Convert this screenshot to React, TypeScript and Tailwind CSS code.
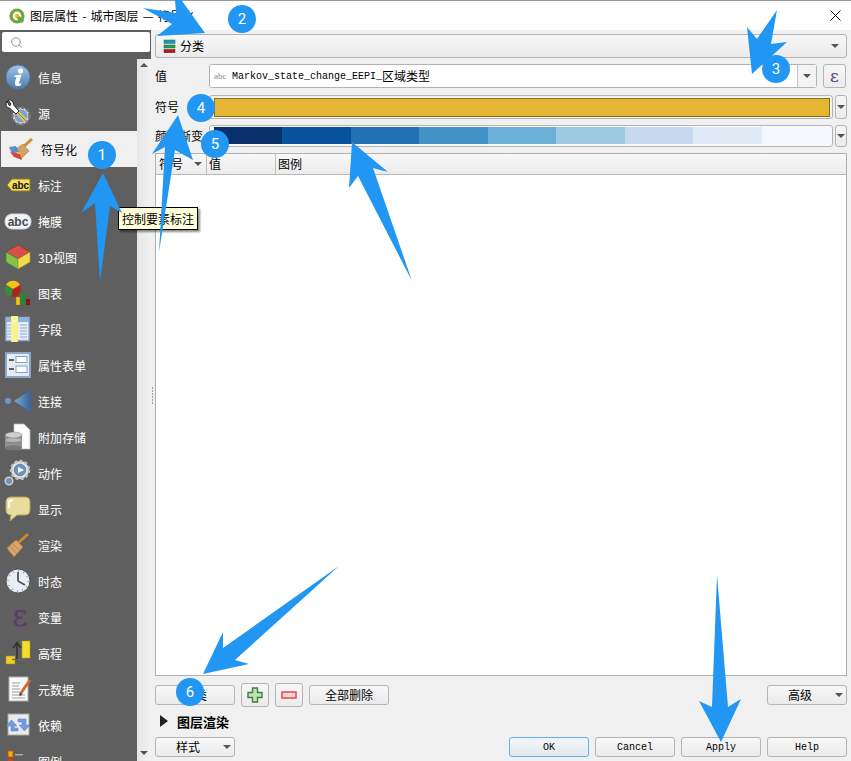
import React from "react";
import { Search } from "lucide-react";

const Caret = () => (
  <svg width="8" height="4" viewBox="0 0 8 4" className="shrink-0">
    <polygon points="0,0 8,0 4,4" fill="#555" />
  </svg>
);

const btn =
  "flex items-center justify-center rounded-[3px] border border-[#b4b4b4] bg-linear-to-b from-[#f7f7f7] to-[#ebebeb]";
const mono = "font-['Liberation_Mono','Noto_Sans_CJK_SC',monospace] text-[10px]";

const I = ({ children }: { children: React.ReactNode }) => (
  <svg width="26" height="26" viewBox="0 0 26 26" className="shrink-0 overflow-visible">
    {children}
  </svg>
);

const icons: Record<string, React.ReactNode> = {
  info: (
    <I>
      <defs>
        <linearGradient id="ig" x1="0" y1="0" x2="0" y2="1">
          <stop offset="0" stopColor="#a6c3e3" />
          <stop offset="1" stopColor="#4a7cb6" />
        </linearGradient>
      </defs>
      <circle cx="13" cy="13" r="12" fill="url(#ig)" stroke="#4d79ab" />
      <circle cx="15.5" cy="7" r="2.6" fill="#fff" />
      <path d="M9.5 11.5 L16.5 10.5 L14 19 Q14 20.5 16.5 19 L15.5 21.5 Q9 23.5 10 18 L11.5 13 L9.5 13 Z" fill="#fff" />
    </I>
  ),
  source: (
    <I>
      <circle cx="16" cy="16" r="8.5" fill="#d0d0d0" stroke="#777" strokeWidth="2.5" strokeDasharray="3 2" />
      <circle cx="16" cy="16" r="6.5" fill="#7fa2cc" />
      <line x1="11" y1="11" x2="21" y2="21" stroke="#d8c46c" strokeWidth="4" />
      <line x1="11" y1="11" x2="21" y2="21" stroke="#5f5530" strokeWidth="0.6" />
      <path d="M2 1 Q-1 7 5 8.5 L11 14 L14 11 L9 5.5 Q8 -1 3 0 L6 4 L4.5 6 Z" fill="#fff" stroke="#222" strokeWidth="1" />
    </I>
  ),
  symbology: (
    <I>
      <line x1="24" y1="3" x2="14" y2="12" stroke="#c9902f" strokeWidth="3" />
      <polygon points="8,13 15,8 21,15 13,23" fill="#d4a06a" stroke="#a97a40" strokeWidth="0.5" />
      <polygon points="1,11 8,10 11,16 4,18" fill="#5b8fd0" />
      <polygon points="1,11 4,18 11,16 13,19 3,17" fill="#f2d64a" />
      <polygon points="2,16 12,18 14,24 6,21" fill="#d8443c" />
    </I>
  ),
  labels: (
    <I>
      <polygon points="2,13 7,7 25,7 25,19 7,19" fill="#f6de5c" stroke="#8d7c22" />
      <text x="15.5" y="16.5" textAnchor="middle" fontSize="10" fontWeight="700" fontFamily="'Liberation Sans',sans-serif" fill="#111">abc</text>
    </I>
  ),
  mask: (
    <I>
      <rect x="0" y="6" width="26" height="15" rx="7" fill="#f2f4f8" stroke="#cfd6e4" />
      <text x="13" y="17.5" textAnchor="middle" fontSize="12" fontWeight="700" fontFamily="'Liberation Sans',sans-serif" fill="#4a4a4a">abc</text>
    </I>
  ),
  d3: (
    <I>
      <polygon points="13,1 25,8 13,15 1,8" fill="#d8504a" stroke="#8d2c28" strokeWidth="0.6" />
      <polygon points="1,8 13,15 13,25 1,18" fill="#7fc444" stroke="#4f8a25" strokeWidth="0.6" />
      <polygon points="13,15 25,8 25,18 13,25" fill="#f4d84e" stroke="#a8922a" strokeWidth="0.6" />
    </I>
  ),
  diagram: (
    <I>
      <circle cx="8" cy="9" r="8" fill="#b3221f" />
      <path d="M8 9 L1 5 A8 8 0 0 1 15 5 Z" fill="#f3c318" />
      <path d="M8 9 L1 5 A8 8 0 0 0 6 17 Z" fill="#2f8f3a" />
      <rect x="11" y="17" width="4" height="8" fill="#f3c318" stroke="#8c6b10" strokeWidth="0.4" />
      <rect x="16" y="12" width="4" height="13" fill="#1c8a3c" />
      <rect x="21" y="19" width="4" height="6" fill="#8a1410" />
    </I>
  ),
  fields: (
    <I>
      <rect x="1" y="1.5" width="23" height="23" fill="#e6edf7" stroke="#8caed6" strokeWidth="1.5" />
      <rect x="1" y="2" width="23" height="4" fill="#8fb1d9" />
      <path d="M15 9h7M15 12h7M15 15h7M15 18h7M15 21h7M2 9h4M2 12h4M2 15h4M2 18h4M2 21h4" stroke="#8fa9cc" />
      <rect x="6" y="0" width="7" height="26" fill="#f8f28f" />
      <rect x="8.5" y="4" width="2" height="2" fill="#fff" />
    </I>
  ),
  form: (
    <I>
      <rect x="1" y="1" width="24" height="24" fill="#e8eaee" stroke="#8aa6c8" strokeWidth="2" />
      <rect x="4" y="7" width="5" height="2" fill="#55606e" />
      <rect x="4" y="16" width="5" height="2" fill="#55606e" />
      <rect x="11" y="4.5" width="11" height="6" fill="#fff" stroke="#7ea0ca" />
      <rect x="11" y="14" width="11" height="6.5" fill="#fff" stroke="#7ea0ca" />
    </I>
  ),
  joins: (
    <I>
      <defs>
        <linearGradient id="jg" x1="0" y1="0" x2="1" y2="0">
          <stop offset="0" stopColor="#7fa6d2" />
          <stop offset="1" stopColor="#33649e" />
        </linearGradient>
      </defs>
      <polygon points="26,2 26,24 9,13" fill="url(#jg)" />
      <circle cx="3" cy="13" r="3" fill="#6f96c4" />
    </I>
  ),
  aux: (
    <I>
      <polygon points="9,0 19,0 25,6 25,25 9,25" fill="#fbfbfb" stroke="#bbb" strokeWidth="0.7" />
      <rect x="0" y="11" width="17" height="13" fill="#8f8f8f" />
      <ellipse cx="8.5" cy="24" rx="8.5" ry="2.5" fill="#777" />
      <ellipse cx="8.5" cy="16" rx="8.5" ry="2.5" fill="#b5b5b5" stroke="#666" strokeWidth="0.4" />
      <ellipse cx="8.5" cy="11" rx="8.5" ry="3" fill="#cfcfcf" stroke="#666" strokeWidth="0.4" />
    </I>
  ),
  actions: (
    <I>
      <circle cx="15" cy="10" r="9" fill="#e2e2e2" stroke="#bdbdbd" strokeWidth="2.5" strokeDasharray="3 2.2" />
      <circle cx="15" cy="10" r="5.8" fill="#6b94c6" stroke="#44648c" strokeWidth="0.6" />
      <polygon points="13,7 19,10 13,13" fill="#fff" />
      <circle cx="4" cy="21" r="3.8" fill="#6f94c4" stroke="#ccc" strokeWidth="1.5" />
    </I>
  ),
  display: (
    <I>
      <path d="M6 1 H20 Q25 1 25 6 V14 Q25 19 20 19 H12 L5 25 L6 19 Q1 19 1 14 V6 Q1 1 6 1 Z" fill="#e8dd9c" stroke="#b3a55c" />
      <path d="M4 12 V7 Q4 4 8 4" stroke="#fff" strokeWidth="2" fill="none" />
    </I>
  ),
  render: (
    <I>
      <line x1="23" y1="2" x2="12" y2="12" stroke="#c98a2e" strokeWidth="3" />
      <polygon points="2,16 11,8 18,15 9,25" fill="#d8a570" stroke="#a87a40" strokeWidth="0.6" />
      <path d="M5 14 L12 22 M8 12 L15 19 M3 18 L9 24" stroke="#b5834c" strokeWidth="0.8" />
    </I>
  ),
  temporal: (
    <I>
      <circle cx="13" cy="13" r="12" fill="#e9eef4" stroke="#555" />
      <circle cx="13" cy="13" r="10" fill="none" stroke="#7c9cc4" strokeWidth="1.4" strokeDasharray="1.2 4" />
      <path d="M13 13 V4 M13 13 L20 17" stroke="#555" strokeWidth="1.8" fill="none" />
    </I>
  ),
  variables: (
    <I>
      <text x="15" y="22" textAnchor="middle" fontSize="30" fontFamily="'DejaVu Serif',serif" fill="#5d3a6e">ε</text>
    </I>
  ),
  elevation: (
    <I>
      <rect x="17" y="1" width="8" height="17" fill="#f6de2e" stroke="#a89818" strokeWidth="0.6" />
      <rect x="1" y="16" width="9" height="8" fill="#f0cf2a" stroke="#a08a18" strokeWidth="0.6" />
      <path d="M7 19.5 H20" stroke="#666" strokeWidth="1.4" />
      <path d="M12 19 V4 M8 8 L12 2.5 L16 8" stroke="#333" strokeWidth="1.6" fill="none" />
    </I>
  ),
  metadata: (
    <I>
      <rect x="4" y="1" width="19" height="24" fill="#fafafa" stroke="#b0b0b0" />
      <path d="M7 7h8M7 10h7M7 13h8M7 16h7M7 19h13M7 22h13" stroke="#9c9c9c" />
      <line x1="25" y1="4" x2="16" y2="17" stroke="#e0662c" strokeWidth="3" />
      <polygon points="14.5,16 17.5,18 14.5,20.5" fill="#444" />
    </I>
  ),
  depend: (
    <I>
      <rect x="3" y="2" width="21" height="21" fill="#ebebeb" stroke="#a8a8a8" />
      <path d="M13 7 H21 V13 H25 L19.5 19 L14 13 H17 V10 H13 Z" fill="#6f9fe0" stroke="#4d7cc0" strokeWidth="0.5" />
      <path d="M13 19 H6 V14 H1 L6.5 8 L12 14 H9 V16 H13 Z" fill="#6f9fe0" stroke="#4d7cc0" strokeWidth="0.5" />
    </I>
  ),
  legend: (
    <I>
      <rect x="3" y="3" width="5" height="6" fill="#f5b400" stroke="#c8531b" />
      <rect x="10" y="6" width="8" height="1.5" fill="#aaa" />
      <rect x="3" y="11" width="5" height="6" fill="#d9431c" />
      <rect x="10" y="14" width="8" height="1.5" fill="#aaa" />
    </I>
  ),
};

const items: [string, string][] = [
  ["info", "信息"],
  ["source", "源"],
  ["symbology", "符号化"],
  ["labels", "标注"],
  ["mask", "掩膜"],
  ["d3", "3D视图"],
  ["diagram", "图表"],
  ["fields", "字段"],
  ["form", "属性表单"],
  ["joins", "连接"],
  ["aux", "附加存储"],
  ["actions", "动作"],
  ["display", "显示"],
  ["render", "渲染"],
  ["temporal", "时态"],
  ["variables", "变量"],
  ["elevation", "高程"],
  ["metadata", "元数据"],
  ["depend", "依赖"],
  ["legend", "图例"],
];

const ramp = ["bg-[#08306b]", "bg-[#08519c]", "bg-[#2171b5]", "bg-[#4292c6]", "bg-[#6baed6]", "bg-[#9ecae1]", "bg-[#c6d9ee]", "bg-[#deebf7]", "bg-[#f5f9fe]"];

const badge =
  "absolute flex h-[28px] w-[28px] items-center justify-center rounded-full bg-[#2196f3] font-['Roboto',sans-serif] text-[15px] text-white";

export default function App() {
  return (
    <div className="relative flex h-[761px] w-[851px] flex-col overflow-hidden bg-[#f0f0f0] font-['Noto_Sans_CJK_SC',sans-serif] text-[12px] leading-none text-black">
      {/* title bar */}
      <div className="flex h-[30px] shrink-0 items-center border-t border-[#9a9a9a] bg-white pl-[9px] pr-[10px]">
        <svg width="16" height="16" viewBox="0 0 16 16">
          <circle cx="8" cy="8" r="6" fill="none" stroke="#6aa83a" strokeWidth="3.2" />
          <path d="M8 8 L14 14" stroke="#6aa83a" strokeWidth="3.2" />
          <circle cx="8" cy="8" r="2" fill="#eeb422" />
        </svg>
        <span className="ml-[5px] [word-spacing:1.5px]">图层属性 - 城市图层 — 符号化</span>
        <svg width="11" height="11" viewBox="0 0 11 11" className="ml-auto">
          <path d="M0.5 0.5 L10.5 10.5 M10.5 0.5 L0.5 10.5" stroke="#111" strokeWidth="1" />
        </svg>
      </div>

      <div className="flex min-h-0 flex-1">
        {/* sidebar */}
        <div className="flex w-[151px] shrink-0 flex-col bg-[#5f5f5f]">
          <div className="h-[29px] shrink-0 pl-[2px] pt-[2px]">
            <div className="flex h-[20px] w-[148px] items-center rounded-[2px] bg-white pl-[8px]">
              <Search size={13} color="#8a8a8a" strokeWidth={1.6} />
            </div>
          </div>
          <div className="flex min-h-0 flex-1">
            <div className="ml-px w-[136px] overflow-hidden">
              {items.map(([key, label]) => {
                const sel = key === "symbology";
                return (
                  <div
                    key={key}
                    className={
                      sel
                        ? "flex h-[36px] items-center gap-[7px] bg-[#f0f0f0] pl-[7px] text-black"
                        : "flex h-[36px] items-center gap-[7px] pl-[4px] text-white"
                    }
                  >
                    {icons[key]}
                    <span className="pt-px">{label}</span>
                  </div>
                );
              })}
            </div>
            <div className="flex w-[14px] flex-col items-center justify-between bg-linear-to-r from-[#e6e6e6] to-[#f2f2f2] pb-[6px] pt-[4px]">
              <svg width="8" height="4" viewBox="0 0 8 4"><polygon points="0,4 8,4 4,0" fill="#555" /></svg>
              <Caret />
            </div>
          </div>
        </div>

        {/* splitter */}
        <div className="flex w-[4px] shrink-0 flex-col items-center justify-center gap-[1.5px] pr-[1px]">
          {[0, 1, 2, 3, 4, 5].map((i) => (
            <div key={i} className="h-[1.5px] w-[1.5px] bg-[#a0a0a0]" />
          ))}
        </div>

        {/* main panel */}
        <div className="flex min-w-0 flex-1 flex-col pr-[4px] pt-[4px]">
          <div className={`${btn} h-[24px] shrink-0 justify-start pl-[7px] pr-[7px]`}>
            <svg width="13" height="14" viewBox="0 0 13 14">
              <rect x="1" y="1" width="11" height="3.4" fill="#1d98b0" stroke="#13606f" strokeWidth="0.5" />
              <rect x="1" y="6" width="11" height="3" fill="#1f9d55" stroke="#146b3a" strokeWidth="0.5" />
              <rect x="1" y="10.5" width="11" height="3.2" fill="#b01c1c" stroke="#7a1010" strokeWidth="0.5" />
            </svg>
            <span className="ml-[4px]">分类</span>
            <span className="ml-auto"><Caret /></span>
          </div>

          {/* value */}
          <div className="mt-[6px] flex h-[24px] shrink-0 items-center">
            <span className="w-[54px] shrink-0">值</span>
            <div className="flex h-full w-[608px] rounded-[3px] border border-[#b4b4b4] bg-white">
              <div className="flex flex-1 items-center pl-[4px]">
                <span className="w-[18px] font-['Liberation_Serif',serif] text-[9px] text-[#8a8a8a]">abc</span>
                <span className={`${mono} pt-px font-medium`}>Markov_state_change_EEPI_</span>
                <span>区域类型</span>
              </div>
              <div className="flex w-[19px] items-center justify-center border-l border-[#c4c4c4] bg-[#f4f4f4]"><Caret /></div>
            </div>
            <div className={`${btn} ml-[6px] h-full w-[23px] font-['DejaVu_Serif',serif] text-[17px] text-[#6a3a7a]`}>ε</div>
          </div>

          {/* symbol */}
          <div className="mt-[7px] flex h-[24px] shrink-0 items-center">
            <span className="w-[54px] shrink-0">符号</span>
            <div className="flex h-full w-[624px] items-center rounded-[3px] border border-[#b4b4b4] bg-[#f2f2f2] pl-[4px] pr-[2px]">
              <div className="h-[19px] w-full border border-[#8a6f20] bg-[#e5b533]" />
            </div>
            <div className={`${btn} ml-[2px] h-full flex-1`}><Caret /></div>
          </div>

          {/* ramp */}
          <div className="mt-[6px] flex h-[22px] shrink-0 items-center">
            <span className="w-[54px] shrink-0">颜色渐变</span>
            <div className="flex h-full w-[624px] items-start rounded-[3px] border border-[#b4b4b4] bg-[#f8f8f8] pl-[4px] pr-[2px] pt-[1px]">
              <div className="flex h-[17px] w-full">
                {ramp.map((c) => (
                  <div key={c} className={`${c} flex-1`} />
                ))}
              </div>
            </div>
            <div className={`${btn} ml-[2px] h-full flex-1`}><Caret /></div>
          </div>

          {/* tree */}
          <div className="mt-[6px] flex min-h-0 flex-1 flex-col border border-[#b0b0b0] bg-white">
            <div className="flex h-[21px] shrink-0 items-center border-b border-[#b8b8b8] bg-linear-to-b from-[#f8f8f8] to-[#ebebeb]">
              <div className="flex h-full w-[51px] items-center justify-between border-r border-[#c0c0c0] pl-[3px] pr-[4px]">
                <span>符号</span>
                <Caret />
              </div>
              <div className="flex h-full w-[69px] items-center border-r border-[#c0c0c0] pl-[2px]">值</div>
              <div className="pl-[2px]">图例</div>
            </div>
          </div>

          {/* actions row */}
          <div className="mt-[7px] flex h-[24px] shrink-0 items-center">
            <div className={`${btn} h-[20px] w-[80px]`}>分类</div>
            <div className={`${btn} ml-[6px] h-[24px] w-[28px]`}>
              <svg width="16" height="16" viewBox="0 0 16 16">
                <path d="M5.5 1 H10.5 V5.5 H15 V10.5 H10.5 V15 H5.5 V10.5 H1 V5.5 H5.5 Z" fill="#bfe3b4" stroke="#3f7d43" strokeWidth="1.4" />
              </svg>
            </div>
            <div className={`${btn} ml-[6px] h-[24px] w-[28px]`}>
              <svg width="16" height="8" viewBox="0 0 16 8">
                <rect x="1" y="1" width="14" height="6" fill="#f9d6d6" stroke="#e5484d" strokeWidth="1.5" />
              </svg>
            </div>
            <div className={`${btn} ml-[6px] h-[20px] w-[80px]`}>全部删除</div>
            <div className={`${btn} relative ml-auto h-[20px] w-[80px] pr-[14px]`}>
              高级
              <span className="absolute right-[3px] top-[7px] flex"><Caret /></span>
            </div>
          </div>

          {/* layer rendering */}
          <div className="mt-[6px] flex h-[16px] shrink-0 items-center pl-[5px]">
            <svg width="8" height="12" viewBox="0 0 8 12"><polygon points="0,0 8,6 0,12" fill="#222" /></svg>
            <span className="ml-[9px] text-[13px] font-bold">图层渲染</span>
          </div>

          {/* dialog buttons */}
          <div className="mb-[4px] mt-[8px] flex h-[20px] shrink-0 items-stretch">
            <div className={`${btn} relative w-[80px] pr-[14px]`}>
              样式
              <span className="absolute right-[3px] top-[7px] flex"><Caret /></span>
            </div>
            <div className={`${mono} ml-auto flex w-[80px] items-center justify-center rounded-[3px] border border-[#5fb3ea] bg-linear-to-b from-[#f2f6fa] to-[#e2e8ee] pt-[2px] font-medium`}>OK</div>
            <div className={`${btn} ${mono} ml-[6px] w-[80px] pt-[2px] font-medium`}>Cancel</div>
            <div className={`${btn} ${mono} ml-[6px] w-[80px] pt-[2px] font-medium`}>Apply</div>
            <div className={`${btn} ${mono} ml-[6px] w-[80px] pt-[2px] font-medium`}>Help</div>
          </div>
        </div>
      </div>

      {/* tooltip */}
      <div className="absolute left-[118px] top-[207px] flex h-[23px] w-[80px] items-center justify-center border border-black bg-[#ffffdc] shadow-[2px_2px_2px_rgba(0,0,0,0.45)]">
        控制要素标注
      </div>

      {/* annotation arrows */}
      <svg width="851" height="761" viewBox="0 0 851 761" className="pointer-events-none absolute left-0 top-0">
        <g fill="#2196f3">
          <polygon points="103,173 122,213 110,206 100,282 95,203 81,213" />
          <polygon points="205,33 157,36 172,24 143,8 176,13 175,0 180,-2" />
          <polygon points="777,10 757,39 747,27 752,74 775,53 787,42 771,44" />
          <polygon points="178,115 193,160 175,150 159,252 165,147 152,154" />
          <polygon points="352,142 388,172 373,168 412,281 358,176 349,188" />
          <polygon points="339,566 223,648 223,632 203,674 249,664 235,660" />
          <polygon points="717,575 728,707 741,699 721,742 699,701 712,707" />
        </g>
      </svg>

      {/* numbered badges */}
      <div className={`${badge} left-[88px] top-[141px]`}>1</div>
      <div className={`${badge} left-[228px] top-[5px]`}>2</div>
      <div className={`${badge} left-[762px] top-[55px]`}>3</div>
      <div className={`${badge} left-[187px] top-[94px]`}>4</div>
      <div className={`${badge} left-[201px] top-[130px]`}>5</div>
      <div className={`${badge} left-[176px] top-[678px]`}>6</div>
    </div>
  );
}
